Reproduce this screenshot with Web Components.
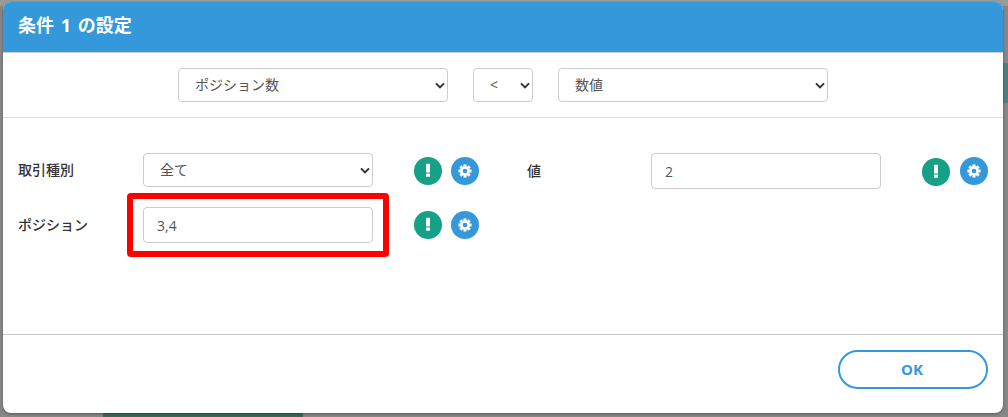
<!DOCTYPE html>
<html lang="ja"><head><meta charset="utf-8">
<style>
html,body{margin:0;padding:0;height:417px;overflow:hidden;background:#8a8a8a}
body{font-family:"Open Sans","Noto Sans CJK JP",sans-serif}
</style></head><body>
<template id="t-backdrop"><style>
:host{display:block;position:relative;width:1008px;height:417px;background:#878787;overflow:hidden;box-sizing:border-box;padding:2px 5px 0 3px}
.top{position:absolute;left:0;right:0;top:0;height:6px;background:#9b9b93}
.teal{position:absolute;right:0;top:63px;width:5px;height:40px;background:#4f7f7c}
.green{position:absolute;left:103px;bottom:0;width:200px;height:4px;background:#3a6b58}
::slotted(*){position:relative}
</style><div class="top"></div><div class="teal"></div><div class="green"></div><slot></slot></template>

<template id="t-modal"><style>
:host{display:flex;flex-direction:column;height:411px;background:#fff;border-radius:8px;overflow:hidden;box-shadow:0 1px 3px rgba(0,0,0,.35)}
header{height:50px;flex:none;background:#3498db;color:#fff;font:700 18px/47px "Open Sans","Noto Sans CJK JP",sans-serif;padding-left:15px;border-bottom:1px solid #c9cfd3;box-sizing:content-box;word-spacing:2px}
.sel{flex:none;height:65px;border-bottom:1px solid #dcdcdc;display:flex;justify-content:center;align-items:flex-start;padding-top:15px;box-sizing:border-box;gap:25px}
.body{flex:1;position:relative}
footer{flex:none;height:79px;box-sizing:border-box;border-top:1px solid #c8c8c8;display:flex;justify-content:flex-end;align-items:flex-start;padding:15px 15px 0 0}
</style><header><slot name="title"></slot></header><div class="sel"><slot name="selectors"></slot></div><div class="body"><slot></slot></div><footer><slot name="footer"></slot></footer></template>

<template id="t-select"><style>
:host{display:inline-flex;align-items:center;justify-content:space-between;box-sizing:border-box;height:34px;border:1px solid #ccc;border-radius:4px;background:#fff;color:#555;font:14px "Open Sans","Noto Sans CJK JP",sans-serif;padding:0 3px 2px 16px;flex:none}
svg{width:10px;height:7px;flex:none;margin:2px -1px 0 0}
</style><span><slot></slot></span><svg viewBox="0 0 10 7"><path d="M1 1.4l4 4 4-4" fill="none" stroke="#333" stroke-width="2"/></svg></template>

<template id="t-input"><style>
:host{display:flex;align-items:center;box-sizing:border-box;height:36px;width:230px;border:1px solid #ccc;border-radius:4px;background:#fff;color:#555;font:14px "Open Sans","Noto Sans CJK JP",sans-serif;padding:0 13px}
</style><slot></slot></template>

<template id="t-roundbtn"><style>
:host{display:block;width:28px;height:28px;border-radius:50%;flex:none;background:#3498db}
:host([kind=warn]){background:#16a085}
svg{display:block;width:28px;height:28px}
</style><svg viewBox="0 0 28 28"></svg></template>

<template id="t-grid"><style>
:host{display:block;padding:35px 0 0 15px;height:100%;box-sizing:border-box}
</style><slot></slot></template>

<template id="t-pillbtn"><style>
:host{display:flex;align-items:center;justify-content:center;box-sizing:border-box;width:150px;height:39px;border:2px solid #3498db;border-radius:20px;background:#fff;color:#3498db;font:700 15px "Open Sans","Noto Sans CJK JP",sans-serif;padding:0 2px 2px 0}
</style><slot></slot></template>

<template id="t-row"><style>
:host{display:flex;align-items:flex-start;height:54px;color:#333;font:500 14px "Open Sans","Noto Sans CJK JP",sans-serif;position:relative}
.lab{width:125px;flex:none;height:34px;box-sizing:border-box;padding-bottom:2px;display:flex;align-items:center;white-space:nowrap}
:host([tall]) .lab{padding-bottom:0}
.w{flex:none;width:230px}
.i{display:flex;gap:9px;margin:4px 0 0 41px;flex:none}
.lab2{width:124px;flex:none;margin-left:48px;height:34px;display:flex;align-items:center}
.i2{display:flex;gap:10px;margin:5px 0 0 41px;flex:none}
.i2 ::slotted(:last-child){margin-top:-1px}
</style><div class="lab"><slot name="label"></slot></div><div class="w"><slot name="control"></slot></div><div class="i"><slot name="icons"></slot></div><div class="lab2"><slot name="label2"></slot></div><div class="w"><slot name="control2"></slot></div><div class="i2"><slot name="icons2"></slot></div></template>

<template id="t-highlight"><style>
:host{display:block;position:absolute;left:124px;top:75px;width:262px;height:64px;box-sizing:border-box;border:6px solid #f00;border-radius:4px}
</style></template>

<script>
const warnIcon='<rect x="12" y="6.8" width="4" height="8.6" rx=".6" fill="#fff"/><rect x="12" y="16.6" width="4" height="3.2" rx=".5" fill="#fff"/>';
const gearIcon=(()=>{let d='';for(let i=0;i<8;i++){const a=i*Math.PI/4;const c=Math.cos(a),s=Math.sin(a);
 const x=14+c*5.2,y=14+s*5.2;d+=`<rect x="-1.4" y="-1.5" width="2.8" height="3" transform="translate(${x.toFixed(2)} ${y.toFixed(2)}) rotate(${i*45})" fill="#fff"/>`;}
 return d+'<circle cx="14" cy="14" r="3.5" fill="none" stroke="#fff" stroke-width="2.4"/>';})();
function def(tag,tpl,init){customElements.define(tag,class extends HTMLElement{constructor(){super();const r=this.attachShadow({mode:'open'});r.appendChild(document.getElementById(tpl).content.cloneNode(true));}connectedCallback(){init&&init(this)}});}
def('app-backdrop','t-backdrop');
def('app-modal','t-modal');
def('app-select','t-select',e=>{e.style.width=(e.getAttribute('w')||230)+'px'});
def('app-input','t-input');
def('app-pill','t-pillbtn');
def('app-row','t-row');
def('app-grid','t-grid');
def('app-highlight','t-highlight');
def('app-round','t-roundbtn',e=>{e.shadowRoot.querySelector('svg').innerHTML=e.getAttribute('kind')==='warn'?warnIcon:gearIcon});
</script>

<app-backdrop>
<app-modal>
<span slot="title">条件 1 の設定</span>
<app-select slot="selectors" w="270">ポジション数</app-select>
<app-select slot="selectors" w="60">&lt;</app-select>
<app-select slot="selectors" w="270">数値</app-select>
<app-grid>
<app-row>
<span slot="label">取引種別</span><app-select slot="control" w="230">全て</app-select>
<app-round slot="icons" kind="warn"></app-round><app-round slot="icons"></app-round>
<span slot="label2">値</span><app-input slot="control2">2</app-input>
<app-round slot="icons2" kind="warn"></app-round><app-round slot="icons2"></app-round>
</app-row>
<app-row tall>
<span slot="label">ポジション</span><app-input slot="control">3,4</app-input>
<app-round slot="icons" kind="warn"></app-round><app-round slot="icons"></app-round>
</app-row>
<app-highlight></app-highlight>
</app-grid>
<app-pill slot="footer">OK</app-pill>
</app-modal>
</app-backdrop>
</body></html>
